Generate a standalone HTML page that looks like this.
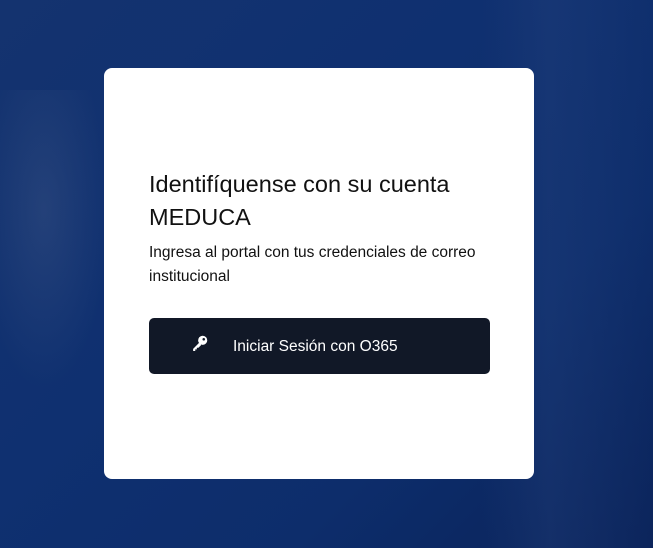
<!DOCTYPE html>
<html><head><meta charset="utf-8"><style>
html,body{margin:0;padding:0;width:653px;height:548px;overflow:hidden}
body{background:linear-gradient(135deg,#14336f 0%,#0f3070 40%,#0d2d6b 70%,#0a2258 100%);font-family:"Liberation Sans",sans-serif;position:relative}
.bg1{position:absolute;left:0;top:90px;width:110px;height:300px;background:radial-gradient(ellipse at 40% 40%,rgba(90,110,150,.25),transparent 70%)}
.bg2{position:absolute;left:480px;top:0;width:173px;height:548px;background:linear-gradient(90deg,rgba(40,70,130,0),rgba(40,70,130,.3) 40%,rgba(20,50,110,.15))}
.card{position:absolute;left:104px;top:68px;width:430px;height:411px;background:#fff;border-radius:8px}
h1{position:absolute;left:45px;top:100px;margin:0;font-weight:400;font-size:23.5px;line-height:33px;color:#111;width:345px}
p{position:absolute;left:45px;top:173px;margin:0;font-size:15.5px;line-height:24px;color:#111;width:350px}
.btn{position:absolute;left:45px;top:250px;width:341px;height:56px;background:#111827;border-radius:5px;color:#fff;font-size:15.5px}
.btn span{position:absolute;left:84px;top:20px}
.btn svg{position:absolute;left:42px;top:17px}
</style></head><body>
<div class="bg1"></div><div class="bg2"></div>
<div class="card">
<h1>Identifíquense con su cuenta MEDUCA</h1>
<p>Ingresa al portal con tus credenciales de correo institucional</p>
<div class="btn"><svg width="17" height="17" viewBox="0 0 16 16"><circle cx="11" cy="5" r="4.3" fill="#fff"/><circle cx="12" cy="4" r="1.2" fill="#111827"/><path d="M8.5 6.5 L2 13 L2 15 L4 15 L4 13.5 L5.5 13.5 L5.5 12 L7 12 L9.5 9.5Z" fill="#fff"/></svg><span>Iniciar Sesión con O365</span></div>
</div>
</body></html>
